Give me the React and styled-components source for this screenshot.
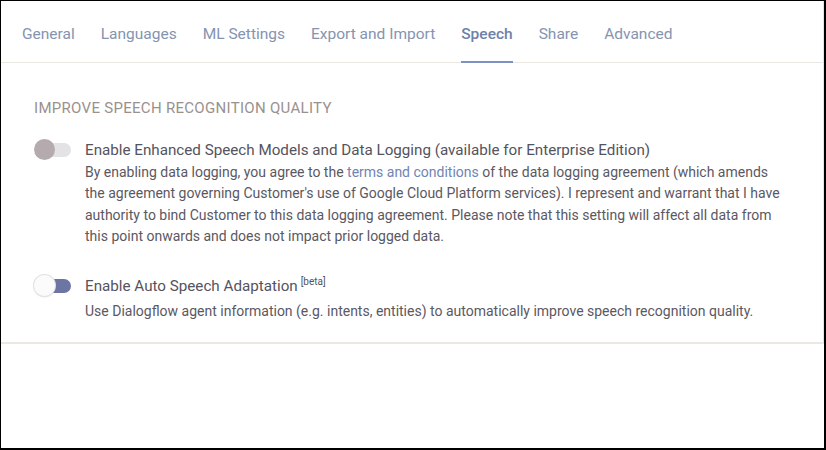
import React from "react";
import styled, { createGlobalStyle } from "styled-components";

const Global = createGlobalStyle`
  html, body { margin: 0; padding: 0; background: #fff; }
  body { font-family: Roboto, "Liberation Sans", Arial, sans-serif; }
  * { box-sizing: border-box; }
`;

const Frame = styled.div`
  width: 826px;
  height: 450px;
  border-top: 1px solid #000;
  border-left: 1px solid #000;
  border-right: 2px solid #000;
  border-bottom: 2px solid #000;
  background: #fff;
  overflow: hidden;
`;

const Card = styled.div`
  border-right: 1px solid #e6e2de;
  border-bottom: 2px solid #ebe7e3;
`;

const TabBar = styled.nav`
  height: 62px;
  display: flex;
  align-items: stretch;
  gap: 26px;
  padding-left: 21px;
  border-bottom: 1px solid #ebe7e3;
`;

const Tab = styled.div`
  display: flex;
  align-items: center;
  padding-top: 6px;
  font-size: 15.5px;
  color: ${(p) => (p.$active ? "#6e82a8" : "#8594b0")};
  font-weight: ${(p) => (p.$active ? 500 : 400)};
  border-bottom: 2px solid ${(p) => (p.$active ? "#7d92c2" : "transparent")};
  margin-bottom: -1px;
  white-space: nowrap;
`;

const Content = styled.section`
  padding: 35px 40px 20px 33px;
`;

const Heading = styled.h2`
  margin: 0 0 21px 0;
  font-size: 15px;
  line-height: 20px;
  font-weight: 400;
  color: #9a918e;
  letter-spacing: 0.3px;
`;

const Setting = styled.div`
  display: grid;
  grid-template-columns: 51px 1fr;
  margin-top: ${(p) => p.$gap || 0}px;
`;

const Toggle = styled.div`
  position: relative;
  width: 37px;
  height: 22px;
`;

const Track = styled.div`
  position: absolute;
  left: 10px;
  right: 0;
  top: 4px;
  height: 14px;
  border-radius: 7px;
  background: ${(p) => (p.$on ? "#6d76a3" : "#e3e3e6")};
`;

const Thumb = styled.div`
  position: absolute;
  left: 0;
  top: 0;
  width: 21px;
  height: 21px;
  border-radius: 50%;
  background: ${(p) => (p.$on ? "#fbfbfb" : "#b5aaad")};
  box-shadow: ${(p) => (p.$on ? "0 0 0 1px #e2e2e2, 0 1px 2px rgba(0,0,0,0.12)" : "none")};
`;

const Body = styled.div``;

const Title = styled.div`
  font-size: 15.2px;
  line-height: 22px;
  color: #55535d;
`;

const Sup = styled.sup`
  font-size: 10px;
  line-height: 0;
  vertical-align: 6px;
  margin-left: 3px;
`;

const Desc = styled.p`
  margin: ${(p) => p.$mt || 1}px 0 0 0;
  font-size: 14px;
  line-height: 21.3px;
  color: #5b5862;
  max-width: 700px;
`;

const Link = styled.a`
  color: #6f84b3;
  text-decoration: none;
`;

const tabs = ["General", "Languages", "ML Settings", "Export and Import", "Speech", "Share", "Advanced"];

export default function App() {
  return (
    <>
      <Global />
      <Frame>
        <Card>
          <TabBar>
            {tabs.map((t) => (
              <Tab key={t} $active={t === "Speech"}>{t}</Tab>
            ))}
          </TabBar>
          <Content>
            <Heading>IMPROVE SPEECH RECOGNITION QUALITY</Heading>
            <Setting>
              <Toggle>
                <Track />
                <Thumb />
              </Toggle>
              <Body>
                <Title>Enable Enhanced Speech Models and Data Logging (available for Enterprise Edition)</Title>
                <Desc>
                  By enabling data logging, you agree to the <Link href="#">terms and conditions</Link> of the data
                  logging agreement (which amends the agreement governing Customer's use of Google Cloud Platform
                  services). I represent and warrant that I have authority to bind Customer to this data logging
                  agreement. Please note that this setting will affect all data from this point onwards and does not
                  impact prior logged data.
                </Desc>
              </Body>
            </Setting>
            <Setting $gap={28}>
              <Toggle>
                <Track $on />
                <Thumb $on />
              </Toggle>
              <Body>
                <Title>
                  Enable Auto Speech Adaptation<Sup>[beta]</Sup>
                </Title>
                <Desc $mt={4}>
                  Use Dialogflow agent information (e.g. intents, entities) to automatically improve speech
                  recognition quality.
                </Desc>
              </Body>
            </Setting>
          </Content>
        </Card>
      </Frame>
    </>
  );
}
